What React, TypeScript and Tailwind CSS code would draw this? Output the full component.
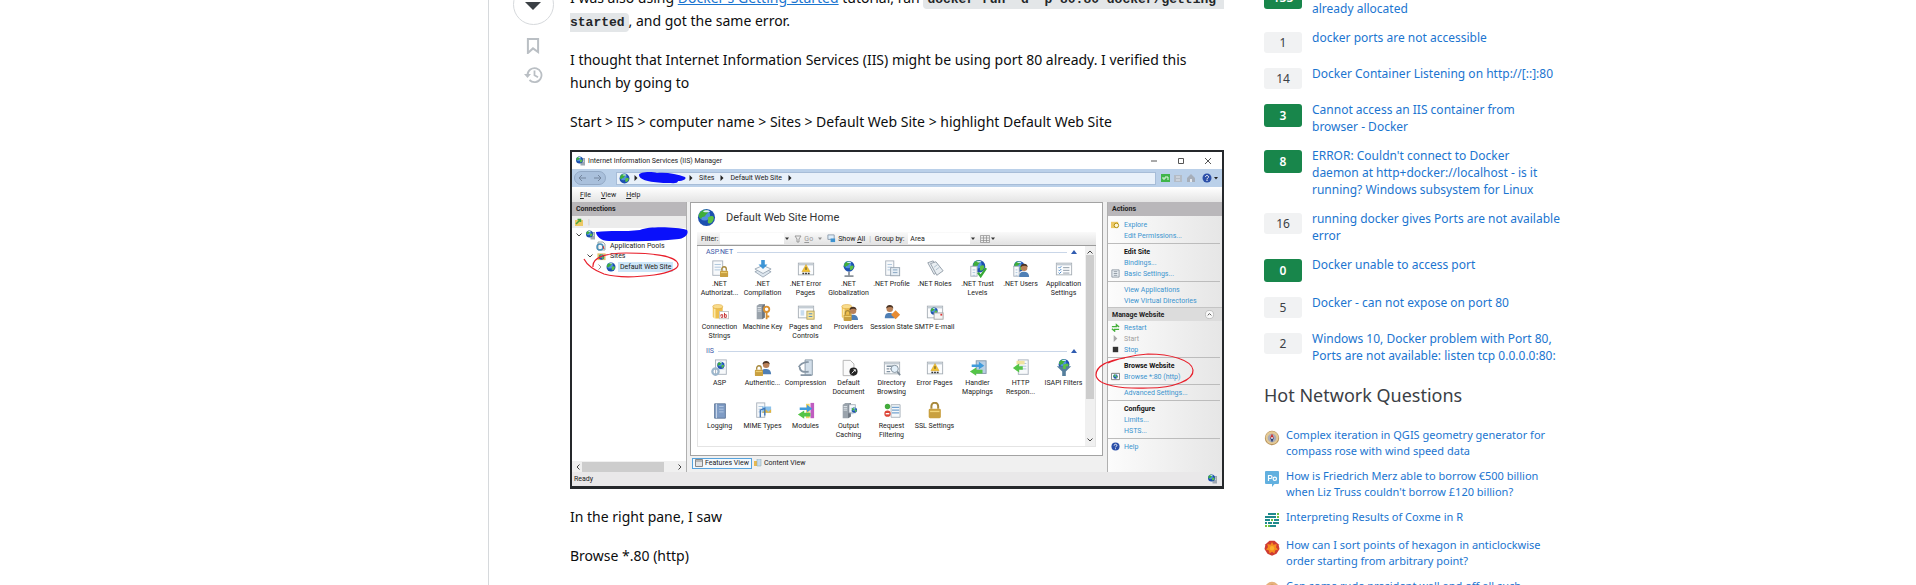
import type { ReactNode } from "react";

type Linked = { score: string; accepted?: boolean; title: ReactNode };

const linked: Linked[] = [
  { score: "133", accepted: true, title: <>Bind for 0.0.0.0:80 failed: port is<br />already allocated</> },
  { score: "1", title: "docker ports are not accessible" },
  { score: "14", title: "Docker Container Listening on http://[::]:80" },
  { score: "3", accepted: true, title: <>Cannot access an IIS container from<br />browser - Docker</> },
  { score: "8", accepted: true, title: <>ERROR: Couldn't connect to Docker<br />daemon at http+docker://localhost - is it<br />running? Windows subsystem for Linux</> },
  { score: "16", title: <>running docker gives Ports are not available<br />error</> },
  { score: "0", accepted: true, title: "Docker unable to access port" },
  { score: "5", title: "Docker - can not expose on port 80" },
  { score: "2", title: <>Windows 10, Docker problem with Port 80,<br />Ports are not available: listen tcp 0.0.0.0:80:</> },
];

/* ---------- site icons ---------- */

const QgisIcon = () => (
  <svg viewBox="0 0 16 16" className="h-4 w-4">
    <circle cx="8" cy="8" r="7.2" fill="#b8935a" />
    <circle cx="8" cy="7.6" r="6.4" fill="#e3c996" />
    <circle cx="8" cy="8" r="4.3" fill="#a9acb8" />
    <path d="M8 3.5 9.800 8H6.200z" fill="#d02a28" />
    <path d="M8 12.5 6.200 8h3.600z" fill="#2b3f78" />
    <circle cx="8" cy="8" r="1" fill="#e8e8ee" />
  </svg>
);
const PoliticsIcon = () => (
  <svg viewBox="0 0 16 16" className="h-4 w-4">
    <path d="M2 0h12a1 1 0 0 1 1 1v11a1 1 0 0 1-1 1h-3.500L8 16v-3H2a1 1 0 0 1-1-1V1a1 1 0 0 1 1-1z" fill="#62b0df" />
    <path d="M4.500 10V4.500h2a1.500 1.500 0 0 1 0 3h-2" fill="none" stroke="#fff" strokeWidth="1.200" />
    <circle cx="10.800" cy="7.800" r="1.700" fill="none" stroke="#fff" strokeWidth="1.200" />
  </svg>
);
const StatsIcon = () => (
  <svg viewBox="0 0 16 16" className="h-4 w-4">
    <g fill="#1f8a8c">
      <rect x="4" y="1" width="8" height="2" /><rect x="1" y="4" width="11" height="2" />
      <rect x="1" y="7" width="5" height="2" /><rect x="10" y="7" width="5" height="2" />
      <rect x="4" y="10" width="4" height="2" /><rect x="9" y="10" width="6" height="2" />
      <rect x="1" y="10" width="2" height="2" /><rect x="6" y="13" width="6" height="2" />
    </g>
    <g fill="#6cc13c">
      <rect x="13" y="1" width="2" height="2" /><rect x="13" y="4" width="2" height="2" />
      <rect x="7" y="7" width="2" height="2" /><rect x="4" y="13" width="2" height="2" /><rect x="1" y="13" width="2" height="2" />
    </g>
  </svg>
);
const MathematicaIcon = () => (
  <svg viewBox="0 0 16 16" className="h-4 w-4">
    <path d="M5.500.8h5l4 3.400 1 4.800-3 4.800L8 15.700l-4.500-1.900-3-4.800 1-4.800z" fill="#cf3b32" />
    <path d="m8 2 1.500 2.800 3.200-.8-.7 3.200L14 9.500l-3 1-.5 3L8 11.800 5.500 13.500l-.5-3-3-1 2-2.300L3.300 4l3.200.8z" fill="#f68b1f" />
    <circle cx="8" cy="8.200" r="2.200" fill="#fbb02d" />
  </svg>
);
const FaceIcon = () => (
  <svg viewBox="0 0 16 16" className="h-4 w-4">
    <circle cx="8" cy="8" r="7.200" fill="#e6b27c" />
    <circle cx="8" cy="8" r="4.500" fill="#c98a50" />
  </svg>
);

const hot: { icon: ReactNode; title: ReactNode }[] = [
  { icon: <QgisIcon />, title: <>Complex iteration in QGIS geometry generator for<br />compass rose with wind speed data</> },
  { icon: <PoliticsIcon />, title: <>How is Friedrich Merz able to borrow €500 billion<br />when Liz Truss couldn't borrow £120 billion?</> },
  { icon: <StatsIcon />, title: "Interpreting Results of Coxme in R" },
  { icon: <MathematicaIcon />, title: <>How can I sort points of hexagon in anticlockwise<br />order starting from arbitrary point?</> },
  { icon: <FaceIcon />, title: "Can some rude president wall and off all such" },
];

/* ---------- drawing parts shared by the feature icons ---------- */

const Globe = ({ x = 10, y = 10, r = 7 }: { x?: number; y?: number; r?: number }) => (
  <g transform={`translate(${x} ${y}) scale(${r / 7})`}>
    <circle r="7" fill="#1c4fb0" />
    <circle cx="-1.500" cy="-2" r="4.500" fill="#4f8fe0" />
    <path d="M-6-3C-4-7 1-7 2-5 1-3-1-3-1-1c-2 1-3 0-3 2-2 0-3-2-2-4z" fill="#3fae3a" />
    <path d="M1 0c2-1 4-2 5 0 0 3-2 5-4 5C0 4 2 2 1 0z" fill="#5cc244" />
    <path d="M-3-5C-1-6.500 2-6 3-5c-2 1-4 1-6 0z" fill="#d5ebfb" />
  </g>
);
const Page = ({ x = 4, y = 1, w = 11, h = 16 }: { x?: number; y?: number; w?: number; h?: number }) => (
  <g>
    <rect x={x} y={y} width={w} height={h} fill="#f7f9fb" stroke="#a7b0ba" />
    <path d={`M${x + 2} ${y + 4}h${w - 4}M${x + 2} ${y + 7}h${w - 4}M${x + 2} ${y + 10}h${w - 4}`} stroke="#a9c3da" />
  </g>
);
const Win = () => (
  <g>
    <rect x="1.500" y="3.500" width="17" height="13" fill="#fbfcfd" stroke="#a5adb5" />
    <path d="M2 5h16" stroke="#c4ccd4" strokeWidth="2" />
  </g>
);
const Lock = ({ x = 0, y = 0 }: { x?: number; y?: number }) => (
  <g transform={`translate(${x} ${y})`}>
    <path d="M2 5V3a2.500 2.500 0 0 1 5 0v2" fill="none" stroke="#a8893c" strokeWidth="1.500" />
    <rect y="5" width="9" height="7" rx="1" fill="#c9a040" />
    <path d="M1 7h7" stroke="#f3d67b" />
  </g>
);
const Person = ({ x = 0, y = 0 }: { x?: number; y?: number }) => (
  <g transform={`translate(${x} ${y})`}>
    <path d="M0 15c0-5 2-6 5-6s6 1 6 6z" fill="#4f7fb5" />
    <circle cx="5.500" cy="4.500" r="3.600" fill="#b98158" />
    <path d="M1.500 4c0-5 8-5 8 0-2-2-5-2-8 0z" fill="#4a3425" />
  </g>
);
const Drum = () => (
  <g>
    <path d="M2 4v11c0 3 11 3 11 0V4z" fill="#eebf4d" />
    <path d="M4 6v11" stroke="#fbe7a6" strokeWidth="2" />
    <ellipse cx="7.500" cy="4" rx="5.500" ry="2.300" fill="#f9dc8c" stroke="#d9a63c" strokeWidth=".6" />
  </g>
);
const Server = () => (
  <g>
    <path d="M3 3l3-2h6v15l-3 2H3z" fill="#9aa3ac" />
    <path d="M9 3l3-2v15l-3 2z" fill="#6d7680" />
    <path d="M4 5h4M4 7h4M4 9h4" stroke="#dfe5ea" />
  </g>
);
const Arrows = () => (
  <g>
    <path d="M3 6h8V3l6 4.500-6 4V9H3z" fill="#3f9bdc" />
    <path d="M15 12H8V9.500L1 14l7 4.500V16h7z" fill="#54c447" />
  </g>
);
const Warn = () => (
  <g>
    <path d="M10 5l4.500 8h-9z" fill="#f5c330" stroke="#c99515" strokeWidth=".5" />
    <path d="M10 8v3" stroke="#333" />
    <path d="M6 15h2M9 15h2M12 15h2" stroke="#333" strokeWidth="1.500" />
  </g>
);
const Roles = () => (
  <g fill="#e9eef2" stroke="#8e9aa5">
    <path d="M2 3l6-2 7 10-6 5z" />
    <path d="M5 4l6-2 8 10-7 5z" />
    <path d="M9 8l4-3M11 11l4-3" stroke="#a9bccb" />
  </g>
);

type Feature = { lines: string[]; art: ReactNode };

const aspnet: Feature[] = [
  { lines: [".NET", "Authorizat..."], art: <><Page x={2} /><Lock x={10} y={7} /></> },
  { lines: [".NET", "Compilation"], art: <><path d="M1 13l9-4 9 4-9 6z" fill="#dde6ee" stroke="#98a6b3" /><path d="M1 10l9-4 9 4-9 5z" fill="#f3f7fa" stroke="#98a6b3" /><path d="M8 0h4v5h3l-5 5-5-5h3z" fill="#3d95d6" /></> },
  { lines: [".NET Error", "Pages"], art: <><Win /><Warn /></> },
  { lines: [".NET", "Globalization"], art: <><Globe y={7} r={6} /><path d="M10 13v4M5 18h10" stroke="#8b939b" strokeWidth="2" /></> },
  { lines: [".NET Profile"], art: <><Page x={3} w={9} /><rect x="8.500" y="8.500" width="10" height="9" fill="#e5edf4" stroke="#95a2ae" /><path d="M11 11h5M11 14h5" stroke="#7f9fbd" /></> },
  { lines: [".NET Roles"], art: <Roles /> },
  { lines: [".NET Trust", "Levels"], art: <><Globe x={11} y={7} r={7} /><Page x={2} y={7} w={7} h={11} /><path d="M10 14l3 4 6-9" fill="none" stroke="#37a936" strokeWidth="2.500" /></> },
  { lines: [".NET Users"], art: <><Globe x={8} y={7} r={6} /><Page x={2} y={7} w={6} h={11} /><Person x={8} y={4} /></> },
  { lines: ["Application", "Settings"], art: <><Win /><path d="M4 8l1 1 2-2M4 11l1 1 2-2M4 14l1 1 2-2" fill="none" stroke="#3b7fc4" /><path d="M9 8.500h7M9 11.500h7M9 14.500h7" stroke="#8894a0" /></> },
  { lines: ["Connection", "Strings"], art: <><Drum /><rect x="9.500" y="9.500" width="10" height="8" fill="#fff" stroke="#c5c5c5" /><path d="M11 15v-2h2v3h-2M15 11v5h2v-3h-2" fill="none" stroke="#c42b2b" /></> },
  { lines: ["Machine Key"], art: <><Server /><circle cx="14" cy="7" r="3" fill="none" stroke="#d9902f" strokeWidth="2" /><path d="M14 10v8M14 15h3" stroke="#d9902f" strokeWidth="2" /></> },
  { lines: ["Pages and", "Controls"], art: <><Win /><path d="M4 8h4v6H4z" fill="#c8dcef" /><rect x="11" y="9" width="8" height="9" fill="#f6e29a" stroke="#b5a35c" /><path d="M13 12h4M13 15h4" stroke="#4b87c5" /></> },
  { lines: ["Providers"], art: <><Drum /><Person x={9} y={4} /><Lock x={4} y={8} /></> },
  { lines: ["Session State"], art: <><Person x={2} y={2} /><path d="M14 8l5 5-5 5-5-5z" fill="#e88b32" /></> },
  { lines: ["SMTP E-mail"], art: <><Win /><Globe x={9} y={9} r={4} /><rect x="9" y="11" width="10" height="7" fill="#f4f4f4" stroke="#a4a4a4" /><path d="M16 12h2v2h-2z" fill="#d33" /></> },
];

const iis: Feature[] = [
  { lines: ["ASP"], art: <><Page x={5} w={12} /><Globe x={11} y={7} r={4} /><circle cx="5" cy="14" r="3.500" fill="none" stroke="#9cb6cc" strokeWidth="2.500" /></> },
  { lines: ["Authentic..."], art: <><Person x={8} y={2} /><Lock x={1} y={7} /></> },
  { lines: ["Compression"], art: <><path d="M9 1h8v17H9z" fill="#d3dfea" stroke="#8796a5" /><path d="M2 9c3-6 9-5 11-6M3 9c0 5 4 6 10 5M4 18h12" fill="none" stroke="#8796a5" strokeWidth="2" /></> },
  { lines: ["Default", "Document"], art: <><path d="M3.500 1.500h8l4 4v13h-12z" fill="#fafafa" stroke="#b0b0b0" /><circle cx="15" cy="14" r="4.500" fill="#222" /><path d="M13 16l4-4M15 12h2v2" stroke="#fff" fill="none" /></> },
  { lines: ["Directory", "Browsing"], art: <><Win /><path d="M4 8h8M4 11h3M8 11h2M4 14h4" stroke="#8091a1" strokeWidth="1.500" /><circle cx="13" cy="11" r="4" fill="#e3f0fa" stroke="#7f8d99" /><path d="M16 14l3 4" stroke="#7f8d99" strokeWidth="2" /></> },
  { lines: ["Error Pages"], art: <><Win /><Warn /></> },
  { lines: ["Handler", "Mappings"], art: <><rect x="8" y="2" width="11" height="14" fill="#b9cfe4" stroke="#8396a8" /><Arrows /></> },
  { lines: ["HTTP", "Respon..."], art: <><Page x={7} w={11} /><rect x="5" y="2" width="9" height="4" fill="#f0e3a0" /><path d="M12 8H8V5L1 10l7 5v-3h4z" fill="#54c447" /></> },
  { lines: ["ISAPI Filters"], art: <><Globe y={6} r={6} /><path d="M2 8h16l-6 6v5H8v-5z" fill="#557f9d" /><path d="M9 6h3v5h-3z" fill="#5cc244" /></> },
  { lines: ["Logging"], art: <><path d="M4 2h12v16H4z" fill="#7f9cc5" stroke="#5e7799" /><path d="M6 2v16" stroke="#dae4f1" /><path d="M9 5h5M9 8h5M9 11h5" stroke="#b4c8e2" /></> },
  { lines: ["MIME Types"], art: <><Page x={3} w={9} /><rect x="9" y="5" width="10" height="7" fill="#8cc2ec" /><path d="M9 12l4-4 3 3 3-3v4z" fill="#e6b53a" /><path d="M7 17v-8l5-2v8" fill="none" stroke="#3d73b5" strokeWidth="1.500" /></> },
  { lines: ["Modules"], art: <><rect x="10" y="2" width="4" height="16" fill="#f1d469" /><rect x="15" y="1" width="4" height="17" fill="#c05cc0" /><Arrows /></> },
  { lines: ["Output", "Caching"], art: <><Server /><Page x={10} y={3} w={7} h={9} /><Globe x={16} y={9} r={3} /></> },
  { lines: ["Request", "Filtering"], art: <><path d="M9 3h10v14H9z" fill="#f5f8fb" stroke="#a7b0ba" /><path d="M10 6h8M10 9h8M10 12h8" stroke="#74a3d0" strokeWidth="1.500" /><circle cx="5" cy="5" r="3" fill="#43ab3c" /><circle cx="5" cy="13" r="3.500" fill="#dc4537" /><path d="M3 13h4" stroke="#fff" strokeWidth="1.500" /></> },
  { lines: ["SSL Settings"], art: <g transform="translate(3 0) scale(1.500)"><Lock /></g> },
];

const FeatureGrid = ({ title, items }: { title: string; items: Feature[] }) => (
  <section>
    <h4 className="flex h-2 items-center gap-1 px-2 text-[7px] leading-[8px] text-[#3d5aa8]">
      {title}
      <span className="h-px flex-1 bg-[#c9d6e8]" />
      <svg viewBox="0 0 6 4" className="h-1 w-1.5"><path d="M0 4l3-4 3 4z" fill="#2f5bb0" /></svg>
    </h4>
    <ul className="grid grid-cols-9 pt-1">
      {items.map((f) => (
        <li key={f.lines.join(" ")} className="flex h-[43px] flex-col items-center">
          <svg viewBox="0 0 20 20" className="h-[18px] w-[18px]">{f.art}</svg>
          <p className="mt-[2px] text-center text-[7px] leading-[9px] whitespace-nowrap text-[#222]">
            {f.lines.map((l) => <span key={l} className="block">{l}</span>)}
          </p>
        </li>
      ))}
    </ul>
  </section>
);

const Action = ({ children, icon, muted }: { children: ReactNode; icon?: ReactNode; muted?: boolean }) => (
  <li className="flex h-[11px] items-center">
    <svg viewBox="0 0 10 10" className="mr-1 ml-[3px] h-[9px] w-[9px] shrink-0">{icon}</svg>
    <a href="#action" className={muted ? "text-[#a0a0a0]" : "text-[#3a94cf]"}>{children}</a>
  </li>
);
const ActionTitle = ({ children }: { children: ReactNode }) => (
  <li className="flex h-[11px] items-center pl-4 font-bold text-[#111]">{children}</li>
);
const Rule = () => <li className="flex h-[5px] items-center"><span className="mr-0.5 h-px flex-1 bg-[#bcbcbc]" /></li>;

const Chevron = () => <svg viewBox="0 0 4 6" className="h-1.5 w-1"><path d="M.5 0l3 3-3 3z" fill="#222" /></svg>;
const Caret = () => <svg viewBox="0 0 6 4" className="h-1 w-1.5"><path d="M1 .5h4l-2 2.500z" fill="#333" /></svg>;
const ServerGlobe = () => (
  <svg viewBox="0 0 20 20" className="h-[10px] w-[10px] shrink-0"><rect x="9" y="4" width="9" height="15" fill="#9ea8b2" /><path d="M11 8h5M11 11h5" stroke="#fff" /><Globe x={7} y={8} r={7} /></svg>
);

const IisManager = () => (
  <figure className="relative mt-[17px] flex h-[339px] flex-col border-2 border-b-[3px] border-[#25282b] bg-[#f0f0f0] text-[7px] leading-[10px] text-[#222]" style={{ fontFamily: 'Roboto, "Open Sans", sans-serif' }}>
    <div className="flex h-[17px] items-center gap-0.5 bg-white pr-2.5 pl-1">
      <ServerGlobe />
      <span className="flex-1">Internet Information Services (IIS) Manager</span>
      <svg viewBox="0 0 62 8" className="h-2 w-[62px]" fill="none" stroke="#555"><path d="M1 4h6M28.500 1.500h5v5h-5zM55 1l6 6M61 1l-6 6" /></svg>
    </div>
    <div className="flex h-[18px] items-center bg-[#bad0e9] pr-1">
      <svg viewBox="0 0 34 14" className="ml-0.5 h-3.5 w-[34px]" fill="none">
        <rect x=".5" y=".5" width="31" height="13" rx="6.500" fill="#a9c0dc" stroke="#93a9c5" />
        <path d="M5 7h7M8 4L5 7l3 3M20 7h7M24 4l3 3-3 3" stroke="#74869e" />
      </svg>
      <div className="ml-2 flex h-[13px] flex-1 items-center border border-[#a7bdd8] bg-[#e9f1fa] pl-0.5">
        <svg viewBox="0 0 20 20" className="mr-1 h-[11px] w-[11px]"><Globe r={9} /></svg>
        <Chevron />
        <span className="w-[51px]" />
        <Chevron /><span className="mx-1.5">Sites</span>
        <Chevron /><span className="mx-1.5">Default Web Site</span>
        <Chevron />
      </div>
      <svg viewBox="0 0 62 12" className="h-3 w-[62px]">
        <rect x="5" y="2" width="9" height="8" fill="#3fb54a" /><path d="M7 5v2h2V5h3v3" stroke="#e4f7e4" fill="none" />
        <rect x="18" y="3" width="8" height="7" fill="#b4bcc6" /><path d="M20 5h4M20 8h4" stroke="#e4e8ee" />
        <path d="M31 6l4-4 4 4v4h-8z" fill="#a6aeb9" /><path d="M34 7h2v3h-2z" fill="#e4e8ee" />
        <circle cx="51" cy="6" r="4.500" fill="#2b4fa8" /><path d="M49.500 5c0-2 3-2 3 0 0 1-1.500 1-1.500 2.500M51 8v1" stroke="#fff" fill="none" />
        <path d="M58 5h4l-2 2.500z" fill="#222" />
      </svg>
    </div>
    <div className="flex h-[15px] items-center gap-2.5 bg-gradient-to-b from-white to-[#e4e4e4] pl-2">
      <span><u>F</u>ile</span><span><u>V</u>iew</span><span><u>H</u>elp</span>
    </div>
    <div className="flex min-h-0 flex-1">
      <div className="flex w-[115px] shrink-0 flex-col border-r border-[#b0b0b0] bg-white">
        <h3 className="flex h-3.5 items-center bg-[#b9b7ba] pl-1 font-bold">Connections</h3>
        <div className="flex h-3 items-center gap-1 bg-[#ececec] pl-0.5 text-[#bbb]">
          <svg viewBox="0 0 10 10" className="h-2.5 w-2.5"><path d="M1 3h8v6H1z" fill="#ecc864" /><path d="M2 7l4-4M3.500 2.500H6.500V5" stroke="#46a33a" strokeWidth="1.500" fill="none" /></svg>|
        </div>
        <ul className="flex flex-1 flex-col pt-0.5 leading-[10px]">
          <li className="flex h-[10px] items-center gap-1 pl-1"><svg viewBox="0 0 6 4" className="h-1 w-1.5"><path d="M.5.5L3 3 5.500.5" stroke="#444" fill="none" /></svg><ServerGlobe /></li>
          <li className="flex h-[11px] items-center gap-1 pl-6"><svg viewBox="0 0 10 10" className="h-2.5 w-2.5"><path d="M2 1h5l2 2v6H2z" fill="#f2f5f8" stroke="#9aa" /><circle cx="4" cy="6" r="3" fill="none" stroke="#4a90b8" strokeWidth="1.500" /><path d="M7 5l1 3" stroke="#c33" /></svg>Application Pools</li>
          <li className="flex h-[10px] items-center gap-1 pl-[15px]"><svg viewBox="0 0 6 4" className="h-1 w-1.5"><path d="M.5.5L3 3 5.500.5" stroke="#444" fill="none" /></svg><svg viewBox="0 0 20 20" className="h-[9px] w-[9px]"><path d="M1 3h18v15H1z" fill="#e6c46b" /><Globe y={11} r={6} /></svg><span>Sites</span></li>
          <li className="flex h-[11px] items-center gap-0.5 pl-[26px]"><svg viewBox="0 0 4 6" className="h-1.5 w-1"><path d="M.5.5L3 3 .5 5.500" stroke="#999" fill="none" /></svg><svg viewBox="0 0 20 20" className="ml-0.5 h-[10px] w-[10px]"><Globe r={9} /></svg><span className="bg-[#cde6f8] px-0.5">Default Web Site</span></li>
        </ul>
        <div className="flex h-[11px] items-center justify-between bg-[#f0f0f0] px-1">
          <svg viewBox="0 0 4 6" className="h-1.5 w-1"><path d="M3.500.5L1 3l2.500 2.500" stroke="#444" fill="none" /></svg>
          <span className="mr-3 h-2.5 w-[82px] bg-[#cdcdcd]" />
          <svg viewBox="0 0 4 6" className="h-1.5 w-1"><path d="M.5.5L3 3 .5 5.500" stroke="#444" fill="none" /></svg>
        </div>
      </div>
      <div className="flex min-w-0 flex-1 flex-col pr-1 pl-[3px]">
        <div className="flex min-h-0 flex-1 flex-col border border-[#a3a3a3] bg-white px-1.5">
          <h2 className="flex h-[29px] items-center gap-2.5 text-[11px] leading-4 text-[#333]"><svg viewBox="0 0 20 20" className="h-[19px] w-[19px]"><Globe r={9} /></svg>Default Web Site Home</h2>
          <div className="flex h-3.5 shrink-0 items-center border-b border-[#9b9b9b] bg-gradient-to-b from-[#fafafa] to-[#e2e2e2] pl-1">
            <label htmlFor="filter">Filter:</label>
            <input id="filter" className="ml-0.5 h-[11px] w-[64px] bg-white" />
            <Caret />
            <svg viewBox="0 0 8 8" className="ml-1 h-2 w-2"><path d="M1 1h6L5 4v3H3V4z" fill="none" stroke="#999" /></svg>
            <span className="ml-0.5 text-[#999]"><u>G</u>o</span>
            <span className="mx-1 opacity-50"><Caret /></span>
            <svg viewBox="0 0 10 10" className="h-[9px] w-[9px]"><path d="M1 1h7v5H1z" fill="#dfeefa" stroke="#8a9aab" /><path d="M4 5h5v4H4z" fill="#3e93d0" /></svg>
            <span className="ml-0.5">Show <u>A</u>ll</span>
            <span className="mx-1 text-[#aaa]">|</span>
            <label htmlFor="group">Group by:</label>
            <select id="group" className="ml-1 h-[11px] w-[62px] appearance-none bg-white pl-0.5"><option>Area</option></select>
            <Caret />
            <svg viewBox="0 0 10 8" className="ml-1 h-2 w-2.5"><path d="M.5.5h9v7h-9zM3.500 1v6M6.500 1v6M1 3h8M1 5.500h8" fill="#eee" stroke="#8b8b8b" strokeWidth=".7" /></svg>
            <Caret />
          </div>
          <div className="flex min-h-0 flex-1 border border-t-0 border-[#e4e4e4]">
            <div className="min-w-0 flex-1 pt-0.5">
              <FeatureGrid title="ASP.NET" items={aspnet} />
              <div className="pt-px"><FeatureGrid title="IIS" items={iis} /></div>
            </div>
            <div className="flex w-2.5 flex-col items-center bg-[#f0f0f0] py-1">
              <svg viewBox="0 0 6 4" className="h-1 w-1.5"><path d="M.5 3.500L3 1l2.500 2.500" stroke="#444" fill="none" /></svg>
              <span className="mt-px mb-auto h-36 w-2 bg-[#cdcdcd]" />
              <svg viewBox="0 0 6 4" className="h-1 w-1.5"><path d="M.5.5L3 3 5.500.5" stroke="#444" fill="none" /></svg>
            </div>
          </div>
          <div className="h-2 shrink-0" />
        </div>
        <div className="flex h-4 shrink-0 items-center gap-0.5 pb-0.5 pl-0.5">
          <button className="flex h-[11px] items-center gap-0.5 border border-[#57a3dc] bg-[#f3f9fe] px-0.5"><svg viewBox="0 0 8 8" className="h-2 w-2"><path d="M.5.5h7v7h-7zM1 2h6" fill="#e4e4e4" stroke="#888" /></svg>Features View</button>
          <button className="flex h-[11px] items-center gap-0.5"><svg viewBox="0 0 8 8" className="h-2 w-2"><path d="M0 2h5v5H0z" fill="#e9b94f" /><path d="M3 0h4v7H3z" fill="#c8dcef" stroke="#8aa" strokeWidth=".5" /></svg>Content View</button>
        </div>
      </div>
      <div className="flex w-[115px] shrink-0 flex-col border-l border-[#b0b0b0] bg-gradient-to-r from-[#fcfcfc] to-[#e6e6e6] leading-[10px]">
        <h3 className="flex h-3.5 items-center bg-[#b9b7ba] pl-1 font-bold">Actions</h3>
        <ul className="flex flex-col pt-[3px]">
          <Action icon={<><path d="M0 2h8v7H0z" fill="#ecc864" /><circle cx="6" cy="6" r="2.500" fill="#fff6d8" stroke="#a80" /></>}>Explore</Action>
          <Action>Edit Permissions...</Action>
          <Rule />
          <ActionTitle>Edit Site</ActionTitle>
          <Action>Bindings...</Action>
          <Action icon={<path d="M1 1h8v8H1zM3 3h4M3 5h4M3 7h4" fill="#eef3f7" stroke="#8a959f" />}>Basic Settings...</Action>
          <Rule />
          <Action>View Applications</Action>
          <Action>View Virtual Directories</Action>
        </ul>
        <h3 className="mt-px flex h-3.5 items-center justify-between border-t border-[#c4c4c4] bg-[#dcdcdc] pr-2 pl-1 font-bold">
          Manage Website
          <svg viewBox="0 0 10 10" className="h-[9px] w-[9px]"><circle cx="5" cy="5" r="4.500" fill="#fafafa" stroke="#bbb" /><path d="M3 6l2-2 2 2" fill="none" stroke="#444" /></svg>
        </h3>
        <ul className="flex flex-col pt-px">
          <Action icon={<path d="M1 4h5V2l3 2.500M9 7H4v2L1 6.500" fill="none" stroke="#44b03a" strokeWidth="1.500" />}>Restart</Action>
          <Action muted icon={<path d="M3 1l4 4-4 4z" fill="#a9a9a9" />}>Start</Action>
          <Action icon={<path d="M2 2h6v6H2z" fill="#333" />}>Stop</Action>
          <Rule />
          <ActionTitle>Browse Website</ActionTitle>
          <Action icon={<><path d="M.5 1.500h9v7h-9z" fill="#fff" stroke="#777" /><Globe x={5} y={5} r={2.5} /></>}>Browse *:80 (http)</Action>
          <Rule />
          <Action>Advanced Settings...</Action>
          <Rule />
          <ActionTitle>Configure</ActionTitle>
          <Action>Limits...</Action>
          <Action>HSTS...</Action>
          <Rule />
          <Action icon={<><circle cx="5" cy="5" r="4.500" fill="#2b4fa8" /><path d="M3.500 4c0-2 3-2 3 0 0 1-1.500 1-1.500 2M5 7v1" stroke="#fff" fill="none" /></>}>Help</Action>
        </ul>
      </div>
    </div>
    <div className="flex h-3.5 items-center justify-between bg-[#e9e8e9] pr-1 pl-0.5"><span>Ready</span><ServerGlobe /></div>

    <svg viewBox="0 0 122 130" className="absolute -top-0.5 -left-0.5 h-[130px] w-[122px]" fill="none">
      <path d="M69 25c0-3 12-4 18-2 9-1 20 1 28 4 2 2-2 4-7 4 0 3-6 2-10 2-12 0-29-2-29-8z" fill="#0a10fa" />
      <path d="M26 82c14-2 28 0 44-2 10-4 36-3 47 0 2 3-1 8-8 9-24 3-50 2-70 2-8 0-13-5-13-9z" fill="#0a10fa" />
      <path d="M14 109c4 8 12 12 20 15 14 4 34 3 50 1 14-2 25-6 24-11-2-8-26-11-52-11-22 0-34 5-33 14" stroke="#e8202c" strokeWidth="1.200" />
    </svg>
    <svg viewBox="0 0 104 38" className="absolute top-[201px] right-6 h-[38px] w-[104px]" fill="none" stroke="#e8202c" strokeWidth="1.200">
      <path d="M31 5C14 7 2 13 2 22c1 11 27 14 52 13 26 0 46-8 45-18C98 7 76 1 54 1 38 2 20 7 14 10" />
    </svg>
  </figure>
);

export default function App() {
  return (
    <div className="h-screen overflow-hidden bg-white pr-1 text-[14px] text-[#0c0d0e]" style={{ fontFamily: '"Noto Sans", "Open Sans", sans-serif' }}>
      <div className="mx-auto flex max-w-[1264px]">
        <div className="w-[164px] shrink-0" />
        <div className="flex min-h-screen min-w-0 flex-1 items-start border-l border-[#d6d9dc] pr-6 pl-[23px]">
          <div className="flex w-[42px] shrink-0 flex-col items-center">
            <button aria-label="Down vote" className="-mt-4 flex h-[41px] w-[41px] items-center justify-center rounded-full border border-[#d6d9dc]">
              <svg viewBox="0 0 18 18" className="h-[18px] w-[18px]"><path d="M1 6h16l-8 8z" fill="#3b4045" /></svg>
            </button>
            <button aria-label="Save" className="mt-[11px] flex h-[18px] items-center">
              <svg viewBox="0 0 18 18" className="h-[18px] w-[18px]"><path d="M3.900 17V2.900h10.200V16L9 12.400z" fill="none" stroke="#babfc4" strokeWidth="2" /></svg>
            </button>
            <a href="#timeline" aria-label="Timeline" className="mt-3">
              <svg viewBox="0 0 19 18" className="h-[18px] w-[19px]"><path d="M3.500 9a7 7 0 1 1 2 5M10.500 4.500V9.200l3.500 2" fill="none" stroke="#babfc4" strokeWidth="1.800" /><path d="M0 8h7l-3.500 4z" fill="#babfc4" /></svg>
            </a>
          </div>
          <article className="ml-4 min-w-0 flex-1 text-[14px] leading-[23px]">
            <p className="-mt-3.5 whitespace-nowrap">
              I was also using <a href="#docs" className="text-[#1b75d0] underline">Docker's Getting Started</a> tutorial, ran{" "}
              <code className="rounded bg-[#e3e6e8] px-1 py-0.5 font-['Liberation_Mono'] text-[13px] leading-[19px] font-bold text-[#232629]">docker run -d -p 80:80 docker/getting-<br />started</code>, and got the same error.
            </p>
            <p className="mt-4">I thought that Internet Information Services (IIS) might be using port 80 already. I verified this<br />hunch by going to</p>
            <p className="mt-4">Start &gt; IIS &gt; computer name &gt; Sites &gt; Default Web Site &gt; highlight Default Web Site</p>
            <IisManager />
            <p className="mt-4">In the right pane, I saw</p>
            <p className="mt-4">Browse *.80 (http)</p>
          </article>
          <aside className="ml-10 w-[300px] shrink-0 text-[12px]">
            <ul className="-mt-[17px] flex flex-col gap-3 leading-[17px]">
              {linked.map((q) => (
                <li key={q.score} className="flex items-start gap-2.5">
                  <span className={q.accepted
                    ? "mt-[3px] flex h-[23px] w-[38px] shrink-0 items-center justify-center rounded-[3px] bg-[#18864b] font-semibold text-white"
                    : "mt-[3px] flex h-[21px] w-[38px] shrink-0 items-center justify-center rounded-[3px] bg-[#f1f2f3] text-[#3b4045]"}>{q.score}</span>
                  <a href="#question" className="whitespace-nowrap text-[#1b75d0]">{q.title}</a>
                </li>
              ))}
            </ul>
            <h4 className="mt-[19px] text-[18px] leading-6 text-[#3b4045]">Hot Network Questions</h4>
            <ul className="mt-5 flex flex-col gap-[9px] text-[11px] leading-4">
              {hot.map((q, i) => (
                <li key={i} className="flex items-start gap-1.5">
                  <span className="mt-[3px] h-4 w-4 shrink-0">{q.icon}</span>
                  <a href="#hot" className="whitespace-nowrap text-[#1b75d0]">{q.title}</a>
                </li>
              ))}
            </ul>
          </aside>
        </div>
      </div>
    </div>
  );
}
